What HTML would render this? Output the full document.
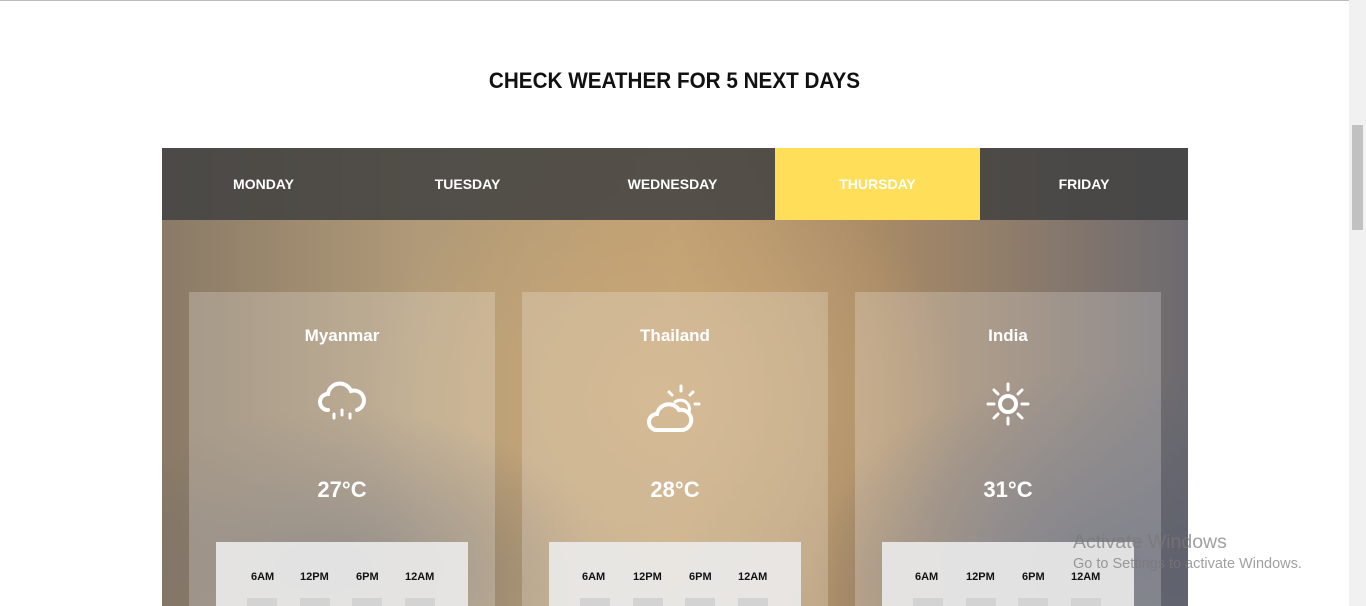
<!DOCTYPE html>
<html><head><style>
*{margin:0;padding:0;box-sizing:border-box}
body{width:1366px;height:606px;overflow:hidden;background:#fff;font-family:"Liberation Sans",sans-serif;position:relative}
.tl{position:absolute;left:0;top:0;width:1366px;height:1px;background:#bbb}
h1{position:absolute;top:68px;left:0;width:1349px;text-align:center;font-size:22px;font-weight:bold;color:#111;transform:scaleX(0.94)}
.sb{position:absolute;right:0;top:0;width:17px;height:606px;background:#f1f1f1}
.sb div{position:absolute;left:3px;top:125px;width:11px;height:105px;background:#c1c1c1}
.wrap{position:absolute;left:162px;top:148px;width:1026px;height:458px;overflow:hidden;
background:
radial-gradient(ellipse 300px 200px at 950px 420px,rgba(90,95,110,.9),rgba(90,95,110,0)),
radial-gradient(ellipse 260px 160px at 180px 420px,rgba(110,105,105,.8),rgba(110,105,105,0)),
radial-gradient(ellipse 300px 250px at 500px 250px,#c9a878,rgba(200,170,120,0)),
linear-gradient(90deg,#8a7a66 0%,#b09a78 25%,#c0a072 50%,#a88a66 70%,#6c6a70 100%)}
.tabs{position:absolute;left:0;top:0;width:1026px;height:72px;background:rgba(65,65,65,.85);display:flex}
.tab{height:72px;line-height:72px;text-align:center;color:#fff;font-weight:bold;font-size:14px}
.tab.on{background:#ffde5a}
.card{position:absolute;top:144px;width:306px;height:320px;background:rgba(255,255,255,.22);text-align:center;color:#fff}
.card .n{position:absolute;top:34px;width:100%;font-size:17px;font-weight:bold}
.card svg{position:absolute;left:125px;top:86px}
.card .t{position:absolute;top:185px;width:100%;font-size:22px;font-weight:bold}
.inner{position:absolute;left:27px;top:250px;width:252px;height:80px;background:rgba(235,235,235,.9);color:#111;font-size:11px;font-weight:bold}
.inner span{position:absolute;top:29px}
.inner i{position:absolute;top:56px;width:30px;height:10px;background:#d3d3d3}
.aw{position:absolute;left:1073px;top:531px;color:rgba(120,120,120,.7);font-size:19.5px}
.aw small{display:block;font-size:14.5px;margin-top:2px}
</style></head><body>
<div class="tl"></div>
<h1>CHECK WEATHER FOR 5 NEXT DAYS</h1>
<div class="wrap">
<div class="tabs">
<div class="tab" style="width:203px">MONDAY</div>
<div class="tab" style="width:205px">TUESDAY</div>
<div class="tab" style="width:205px">WEDNESDAY</div>
<div class="tab on" style="width:205px">THURSDAY</div>
<div class="tab" style="width:208px">FRIDAY</div>
</div>
<div class="card" style="left:27px"><div class="n">Myanmar</div>
<svg width="56" height="50" viewBox="0 0 56 50" fill="none" stroke="#fff" stroke-width="4" stroke-linecap="round"><path d="M14 32a8 8 0 0 1 0-16a12 12 0 0 1 23-3a9 9 0 0 1 6 19"/><path d="M20 36v4M28 32v5M36 36v4" stroke-width="3"/></svg>
<div class="t">27°C</div>
<div class="inner"><span style="left:35px">6AM</span><span style="left:84px">12PM</span><span style="left:140px">6PM</span><span style="left:189px">12AM</span><i style="left:31px"></i><i style="left:84px"></i><i style="left:136px"></i><i style="left:189px"></i></div></div>
<div class="card" style="left:360px"><div class="n">Thailand</div>
<svg width="56" height="56" viewBox="0 0 56 56" fill="none" stroke="#fff" stroke-width="4" stroke-linecap="round"><path d="M10 52a8 8 0 0 1 0-16a12 12 0 0 1 22-4a9 9 0 0 1 4 20z"/><path d="M28 24a9 9 0 0 1 14 10" stroke-width="3"/><path d="M34 8v5M22 14l3 3M46 14l-3 3M52 26h-4" stroke-width="3"/></svg>
<div class="t">28°C</div>
<div class="inner"><span style="left:33px">6AM</span><span style="left:84px">12PM</span><span style="left:140px">6PM</span><span style="left:189px">12AM</span><i style="left:31px"></i><i style="left:84px"></i><i style="left:136px"></i><i style="left:189px"></i></div></div>
<div class="card" style="left:693px"><div class="n">India</div>
<svg width="56" height="56" viewBox="0 0 56 56" fill="none" stroke="#fff" stroke-width="4" stroke-linecap="round"><circle cx="28" cy="26" r="8"/><path d="M28 6v6M28 40v6M8 26h6M42 26h6M14 12l4 4M42 12l-4 4M14 40l4-4M42 40l-4-4" stroke-width="3"/></svg>
<div class="t">31°C</div>
<div class="inner"><span style="left:33px">6AM</span><span style="left:84px">12PM</span><span style="left:140px">6PM</span><span style="left:189px">12AM</span><i style="left:31px"></i><i style="left:84px"></i><i style="left:136px"></i><i style="left:189px"></i></div></div>
</div>
<div class="aw">Activate Windows<small>Go to Settings to activate Windows.</small></div>
<div class="sb"><div></div></div>
</body></html>
